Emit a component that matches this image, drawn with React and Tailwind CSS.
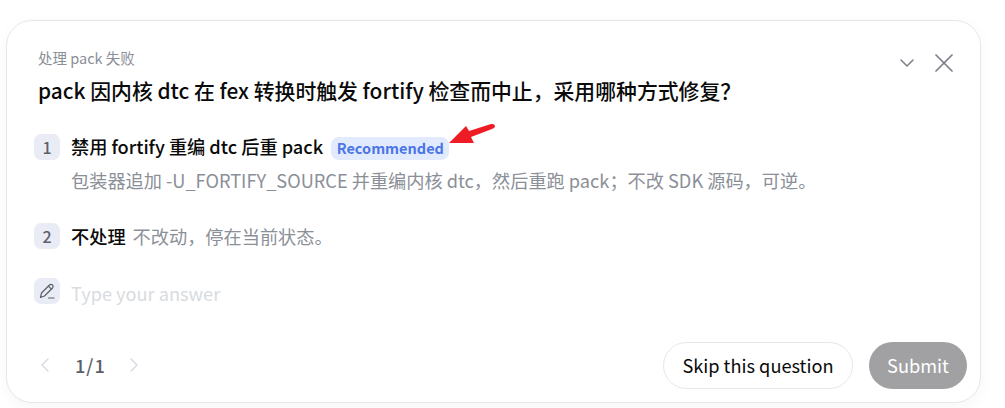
import React from "react";
import { ChevronDown, ChevronLeft, ChevronRight, X } from "lucide-react";

const App = () => {
    return (
        <div className="h-[408px] w-[1005px] bg-white pt-5 pl-1.5 font-['Noto_Sans_CJK_SC',sans-serif]">
            <div className="relative flex h-[383px] w-[975px] flex-col rounded-[26px] border border-[#e5e7eb] bg-white pt-[26px] pr-[13px] pb-[13px] pl-[27px] shadow-[0_4px_16px_rgba(0,0,0,0.04)]">
                {/* Header */}
                <div className="pl-1">
                    <div className="h-[22px] text-[14.5px] leading-[22px] text-[#8b8f97]">处理 pack 失败</div>
                    <div className="mt-[6px] h-[30px] text-[20.85px] leading-[30px] font-medium text-[#0a0a0a]">
                        pack 因内核 dtc 在 fex 转换时触发 fortify 检查而中止，采用哪种方式修复？
                    </div>
                </div>
                <div className="absolute top-[26px] right-[20px] flex items-center gap-[9px] text-[#7b7f87]">
                    <ChevronDown size={24} strokeWidth={1.5} />
                    <X size={32} strokeWidth={1.3} />
                </div>

                {/* Options */}
                <div className="mt-[29px] flex gap-[11px]">
                    <div className="flex h-[26px] w-[26px] shrink-0 items-center justify-center rounded-[7px] bg-[#e9ecf4] text-[16px] font-medium text-[#5c6068]">1</div>
                    <div>
                        <div className="flex h-[26px] items-center">
                            <span className="text-[18.2px] font-medium text-[#0a0a0a]">禁用 fortify 重编 dtc 后重 pack</span>
                            <span className="mt-[2px] ml-2 flex h-[23px] items-center rounded-[8px] bg-[#e2ebfd] pr-[5px] pl-[5.5px] text-[14.5px] font-bold text-[#4c75e6]">Recommended</span>
                            <svg className="h-[26px] w-[48px] overflow-visible" viewBox="0 0 48 26">
                                <path d="M0 9 L17 -8 L20 -3 L42 -10 Q46 -10.5 46 -7.5 Q45.5 -6 43 -5 L22 3 L25 9 Z" fill="#ee1c25" />
                            </svg>
                        </div>
                        <div className="mt-[7px] text-[18.2px] leading-[26px] text-[#8b8f97]">
                            包装器追加 -U_FORTIFY_SOURCE 并重编内核 dtc，然后重跑 pack；不改 SDK 源码，可逆。
                        </div>
                    </div>
                </div>

                <div className="mt-[30px] flex gap-[11px]">
                    <div className="flex h-[26px] w-[26px] shrink-0 items-center justify-center rounded-[7px] bg-[#e9ecf4] text-[16px] font-medium text-[#5c6068]">2</div>
                    <div className="flex h-[26px] items-center gap-[7px] pt-[1px]">
                        <span className="text-[18.2px] font-medium text-[#0a0a0a]">不处理</span>
                        <span className="text-[18.2px] text-[#8b8f97]">不改动，停在当前状态。</span>
                    </div>
                </div>

                {/* Free answer */}
                <div className="mt-[29px] flex gap-[11px]">
                    <div className="flex h-[26px] w-[26px] shrink-0 items-center justify-center rounded-[7px] bg-[#e9ecf4] text-[#5c6068]">
                        <svg width="18" height="18" viewBox="0 0 18 18" fill="none" stroke="currentColor" strokeWidth="1.2" strokeLinecap="round" strokeLinejoin="round">
                            <path d="M2.5 15.5 L3.5 11 L11.5 3 Q13 1.8 14.5 3 Q15.8 4.5 14.5 6 L6.5 14 Z" />
                            <path d="M10.5 4.2 L13.4 7.1" />
                            <path d="M10.5 16 H16" />
                        </svg>
                    </div>
                    <div className="h-[26px] pt-[2px] text-[18.2px] leading-[26px] text-[#d8dbe0]">Type your answer</div>
                </div>

                {/* Footer */}
                <div className="mt-auto flex items-center justify-between">
                    <div className="flex items-center text-[#d3d7de]">
                        <ChevronLeft size={24} strokeWidth={1.3} className="-ml-[1px]" />
                        <span className="mr-[16px] ml-[18px] text-[18.2px] font-medium tracking-[1px] text-[#5c6068]">1/1</span>
                        <ChevronRight size={24} strokeWidth={1.3} />
                    </div>
                    <div className="flex items-center gap-4">
                        <button className="h-[47px] w-[190px] rounded-full border border-[#e5e7eb] bg-white text-[18.2px] text-[#0a0a0a]">Skip this question</button>
                        <button className="h-[47px] w-[98px] rounded-full bg-[#a1a1a3] text-[18.2px] text-white">Submit</button>
                    </div>
                </div>
            </div>
        </div>
    );
};

export default App;
